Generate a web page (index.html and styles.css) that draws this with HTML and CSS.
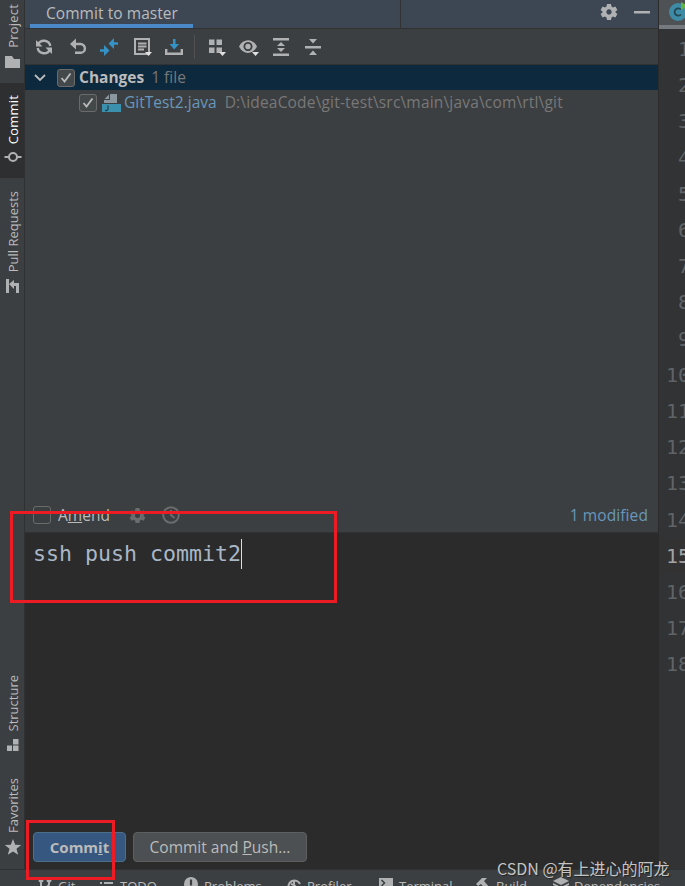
FILE: index.html
```html
<!DOCTYPE html>
<html lang="en">
<head>
    <meta charset="UTF-8">
    <title>Commit to master</title>
    <link rel="stylesheet" href="styles.css">
</head>
<body>
    <div class="workspace">
        <nav class="stripe">
            <div class="stripe-tab project">
                <span>Project</span>
                <svg width="16" height="16" viewBox="0 0 16 16"><path class="fill" d="M0 2h7l2 3h6v9H0z"/></svg>
            </div>
            <div class="stripe-tab commit active">
                <span>Commit</span>
                <svg width="18" height="16" viewBox="0 0 18 16"><circle class="line" cx="9" cy="8" r="4"/><path class="line" d="M0.5 8H5M13 8h4.500"/></svg>
            </div>
            <div class="stripe-tab pull">
                <span>Pull Requests</span>
                <svg width="16" height="16" viewBox="0 0 16 16"><path class="fill" d="M1 1h3v14H1zM4 6l5-4v3h5v10h-3V8H9v3z"/></svg>
            </div>
            <div class="stripe-tab structure">
                <span>Structure</span>
                <svg width="16" height="16" viewBox="0 0 16 16"><path class="fill" d="M8 2h5.500v5.500H8zM2 8.500h5V14H2zM8 8.500h5.500V14H8z"/></svg>
            </div>
            <div class="stripe-tab favorites">
                <span>Favorites</span>
                <svg width="18" height="18" viewBox="0 0 18 18"><path class="fill" d="M9 1l2.200 5.700 6 .3-4.700 3.800 1.700 6L9 13.400l-5.200 3.400 1.700-6L.8 7l6-.3z"/></svg>
            </div>
        </nav>

        <main class="commit-panel">
            <header class="panel-header">
                <div class="panel-tab">Commit to master</div>
                <div class="panel-actions">
                    <svg width="18" height="18" viewBox="0 0 18 18"><use href="#gear"/></svg>
                    <svg width="16" height="18" viewBox="0 0 16 18"><path class="fill" d="M0 8h16v2.500H0z"/></svg>
                </div>
            </header>

            <div class="toolbar">
                <svg height="18" viewBox="0 0 18 18"><path class="line thick" d="M3 6.500a6.500 6.500 0 0 1 12.300 1.500M15 11.500a6.500 6.500 0 0 1-12.300-1.500"/><path class="fill" d="M1 2v6.500h6.500zM17 16V9.500h-6.500z"/></svg>
                <svg height="18" viewBox="0 0 18 18"><path class="line thick" d="M6 6h6.500a4.400 4.400 0 0 1 0 8.800H7"/><path class="fill" d="M8 .5v11L2 6z"/></svg>
                <svg height="18" viewBox="0 0 20 18"><path class="blue-line" d="M1 12.500h5M19 5.500h-5"/><path class="blue" d="M5 7l5.500 5.500L5 18zM15 0v11L9.500 5.500z"/></svg>
                <svg height="20" viewBox="0 0 20 20"><path class="line" d="M3 2h14v15H3zM6 6.500h8.500M6 9.500h8.500M6 12.500h6"/><path class="arrow" d="M13 15h7l-3.500 4z"/></svg>
                <svg height="18" viewBox="0 0 18 18"><path class="line thick" d="M1.200 11v4.800h15.600V11"/><path class="blue" d="M8 1h2.500v5H14l-4.800 5.500L4.500 6H8z"/></svg>
                <i class="separator"></i>
                <svg height="20" viewBox="0 0 20 20"><path class="fill" d="M2 2.500h5.500V8H2zM9.500 2.500H15V8H9.500zM2 10.500h5.500V16H2zM9.500 10.500H15V16H9.500z"/><path class="arrow" d="M12 15h7l-3.500 4z"/></svg>
                <svg class="tight" height="20" viewBox="0 0 20 20"><path class="fill" fill-rule="evenodd" d="M0 9.500C4 1 14 1 18 9.500c-4 8.500-14 8.500-18 0zm9-4.500a4.500 4.500 0 1 0 .01 0z"/><circle class="fill" cx="9" cy="9.500" r="2.700"/><path class="arrow" d="M13 15h7l-3.500 4z"/></svg>
                <svg class="tight" height="18" viewBox="-1 0 16 18"><path class="fill" d="M0 0h16v2.500H0zM0 15.500h16V18H0zM8 4l4 4H4zM8 14l4-4H4z"/></svg>
                <svg class="tight" height="18" viewBox="-1 0 16 18"><path class="fill" d="M0 8h16v2.500H0zM4 1h8L8 5.500zM4 17h8l-4-4.500z"/></svg>
            </div>

            <div class="tree">
                <div class="tree-row selected">
                    <svg class="chevron" width="12" height="8" viewBox="0 0 12 8"><path d="M1 1l5 5 5-5"/></svg>
                    <span class="checkbox"><svg width="12" height="12" viewBox="0 0 12 12"><path d="M1.500 6l3 3.500L10.500 1.500"/></svg></span>
                    <b>Changes</b>
                    <span class="muted count">1 file</span>
                </div>
                <div class="tree-row file">
                    <span class="checkbox"><svg width="12" height="12" viewBox="0 0 12 12"><path d="M1.500 6l3 3.500L10.500 1.500"/></svg></span>
                    <svg class="java" width="20" height="20" viewBox="0 0 20 20">
                        <path fill="#8b979f" d="M9 1h7v9H3V7h6z"/>
                        <path fill="#8b979f" d="M3.500 6L8 1.500V6z"/>
                        <path fill="#3b91ad" d="M1 11h19v8H1z"/>
                        <path fill="none" stroke="#20434f" stroke-width="1.300" d="M7 12.500v3.500q0 1.500-1.500 1.500H4"/>
                    </svg>
                    <span class="file-name">GitTest2.java</span>
                    <span class="muted path">D:\ideaCode\git-test\src\main\java\com\rtl\git</span>
                </div>
            </div>

            <div class="amend-row">
                <span class="checkbox empty"></span>
                <label>A<u>m</u>end</label>
                <svg class="dim amend-gear" width="17" height="17" viewBox="0 0 18 18"><use href="#gear"/></svg>
                <svg class="dim" width="18" height="18" viewBox="0 0 18 18"><circle class="line" cx="9" cy="9" r="7.800"/><path class="line" d="M9 4v5l3.500 3"/></svg>
                <span class="modified">1 modified</span>
            </div>

            <div class="message">
                <div class="message-text">ssh push commit2</div>
                <div class="buttons">
                    <button class="primary">Comm<u>i</u>t</button>
                    <button>Commit and <u>P</u>ush...</button>
                </div>
            </div>
        </main>

        <aside class="editor">
            <div class="editor-tab">
                <svg width="20" height="20" viewBox="0 0 20 20"><circle cx="10" cy="10" r="9" fill="#3d8ba5"/><path fill="none" stroke="#24444f" stroke-width="1.700" d="M13 7.500a3.700 3.700 0 1 0 0 5"/><path fill="#62b543" d="M13 0l7 4-7 4z"/></svg>
            </div>
            <ol class="line-numbers">
                <li>1</li><li>2</li><li>3</li><li>4</li><li>5</li><li>6</li>
                <li>7</li><li>8</li><li>9</li><li>10</li><li>11</li><li>12</li>
                <li>13</li><li>14</li><li class="current">15</li><li>16</li><li>17</li><li>18</li>
            </ol>
        </aside>
    </div>

    <footer class="bottom-bar">
        <div class="tool git"><svg width="16" height="16" viewBox="0 0 16 16"><path class="line" d="M4 3v12M12 3v4q0 3-8 5"/><circle class="fill" cx="4" cy="3" r="2.500"/><circle class="fill" cx="12" cy="3" r="2.500"/></svg>Git</div>
        <div class="tool todo"><svg width="16" height="16" viewBox="0 0 16 16"><path class="line" d="M1 2h2M5 2h9M1 6h2M5 6h9M1 10h2M5 10h9"/></svg>TODO</div>
        <div class="tool problems"><svg width="16" height="16" viewBox="0 0 16 16"><circle class="fill" cx="8" cy="7" r="7"/><path stroke="#3c3f41" stroke-width="2.200" d="M8 2.500v6M8 10v2"/></svg>Problems</div>
        <div class="tool profiler"><svg width="16" height="16" viewBox="0 0 16 16"><path class="line" d="M3 12A6 6 0 1 1 14 7M8 3v5l4 4M5 7l3 1"/></svg>Profiler</div>
        <div class="tool terminal"><svg width="16" height="16" viewBox="0 0 16 16"><path class="fill" d="M1 1h14v13H1z"/><path fill="none" stroke="#3c3f41" stroke-width="1.500" d="M3.500 3l3 3-3 3"/></svg>Terminal</div>
        <div class="tool build"><svg width="16" height="16" viewBox="0 0 16 16"><path class="fill" d="M1 7l6-6h5L9 4l6 7-3 3-6-7-3 2z"/></svg>Build</div>
        <div class="tool deps"><svg width="16" height="16" viewBox="0 0 16 16"><path class="fill" d="M8 0l8 4-8 4-8-4zM0 6l8 4 8-4v2l-8 4-8-4z"/></svg>Dependencies</div>
    </footer>

    <div class="highlight highlight-message"></div>
    <div class="highlight highlight-commit"></div>
    <div class="watermark">CSDN @有上进心的阿龙</div>

    <svg class="symbols" width="0" height="0">
        <symbol id="gear" viewBox="0 0 18 18">
            <path class="fill" fill-rule="evenodd" d="M7 1h4l.5 2.500 1.500.9 2.400-.9 2 3.500-1.900 1.500v1l1.900 1.500-2 3.500-2.400-.9-1.500.9L11 17H7l-.5-2.500-1.500-.9-2.400.9-2-3.500 1.900-1.500v-1L.6 7l2-3.500 2.400.9 1.500-.9zm2 5.300a2.700 2.700 0 1 0 .01 0z"/>
        </symbol>
    </svg>
</body>
</html>
```
FILE: styles.css
```css
* {
    box-sizing: border-box;
}
body {
    position: relative;
    width: 685px;
    height: 886px;
    margin: 0;
    overflow: hidden;
    background-color: #2b2b2b;
    color: #bbbbbb;
    font-family: "Open Sans", "Noto Sans", sans-serif;
    font-size: 15.5px;
    white-space: nowrap;
}
svg {
    display: block;
    flex: none;
}
.fill {
    fill: #afb1b3;
}
.line {
    fill: none;
    stroke: #afb1b3;
    stroke-width: 2;
}
.thick {
    stroke-width: 2.4;
}
.blue {
    fill: #3592c4;
}
.blue-line {
    fill: none;
    stroke: #3592c4;
    stroke-width: 2.4;
}
.arrow {
    fill: #e0e0e0;
}
.dim {
    opacity: 0.4;
}
.symbols {
    position: absolute;
}
.workspace {
    display: flex;
    height: 869px;
}

/* left stripe */
.stripe {
    display: flex;
    flex-direction: column;
    width: 25px;
    flex: none;
    background-color: #3c3f41;
    border-right: 1px solid #2f3133;
}
.stripe-tab {
    display: flex;
    flex-direction: column;
    align-items: center;
    justify-content: flex-end;
    gap: 6px;
    padding: 0 0 13px 1px;
    font-size: 13px;
    line-height: 20px;
}
.stripe-tab span {
    writing-mode: vertical-rl;
    transform: rotate(180deg);
}
.project {
    height: 83px;
    letter-spacing: 0.2px;
}
.commit {
    height: 95px;
    gap: 5px;
    letter-spacing: 0.2px;
}
.active {
    background-color: #2d2f30;
    color: #ffffff;
}
.pull {
    height: 127px;
    padding-bottom: 11px;
}
.structure {
    height: 100px;
    margin-top: auto;
    padding-bottom: 12px;
}
.favorites {
    height: 104px;
    gap: 5px;
}

/* commit tool window */
.commit-panel {
    display: flex;
    flex-direction: column;
    width: 633px;
    flex: none;
}
.panel-header {
    display: flex;
    justify-content: space-between;
    height: 29px;
    padding: 0 8px 0 5px;
    background: linear-gradient(#323232, #323232) 375px 0 / 1px 28px no-repeat #3d4754;
    border-bottom: 1px solid #323232;
}
.panel-tab {
    width: 163px;
    padding-left: 16px;
    border-bottom: 4px solid #4a88c7;
    letter-spacing: 0.06px;
    line-height: 26px;
}
.panel-actions {
    display: flex;
    gap: 16px;
    padding-top: 3px;
}
.toolbar {
    display: flex;
    align-items: center;
    gap: 12.5px;
    height: 36px;
    padding-left: 9px;
    background-color: #3c3f41;
    border-bottom: 1px solid #323232;
}
.toolbar svg {
    width: 20px;
}
.toolbar .tight {
    margin-left: -1px;
}
.separator {
    width: 1px;
    height: 24px;
    margin-left: -3px;
    background-color: #515151;
}
.tree {
    flex: 1;
    background-color: #3c3f41;
}
.tree-row {
    display: flex;
    align-items: center;
    height: 25px;
}
.tree-row b,
.count,
.file-name,
.path {
    padding-bottom: 2px;
}
.selected {
    padding-left: 9px;
    background-color: #0d293e;
}
.chevron {
    margin-right: 11px;
}
.chevron path,
.checkbox path {
    fill: none;
    stroke: #bbbbbb;
    stroke-width: 1.8;
}
.checkbox {
    display: flex;
    align-items: center;
    justify-content: center;
    width: 18px;
    height: 18px;
    flex: none;
    margin-right: 4px;
    border: 1px solid #6b6b6b;
    border-radius: 3px;
    background-color: #43494a;
}
.muted {
    color: #787878;
}
.count {
    margin-left: 7px;
}
.file {
    padding-left: 54px;
}
.java {
    margin-right: 3px;
}
.file-name {
    color: #6897bb;
}
.path {
    margin-left: 8px;
    letter-spacing: 0.18px;
}
.amend-row {
    display: flex;
    align-items: center;
    height: 35px;
    padding: 0 10px 0 8px;
    background-color: #3c3f41;
    border-bottom: 1px solid #323232;
}
.empty {
    margin-right: 7px;
    background-color: transparent;
}
.amend-gear {
    margin: 0 16px 0 19px;
}
.modified {
    margin-left: auto;
    color: #6897bb;
    letter-spacing: 0.1px;
}
.message {
    display: flex;
    flex-direction: column;
    justify-content: space-between;
    height: 336px;
    padding: 6px 8px 7px;
    background-color: #2b2b2b;
}
.message-text {
    width: 209px;
    border-right: 1px solid #dddddd;
    color: #a9b7c6;
    font-family: "DejaVu Sans Mono", monospace;
    font-size: 21.6px;
    line-height: 30px;
}
.buttons {
    display: flex;
    gap: 7px;
}
button {
    width: 174px;
    height: 30px;
    padding: 0;
    border: 1px solid #5e6060;
    border-radius: 4px;
    background-color: #4c5052;
    color: #bbbbbb;
    font: inherit;
}
.primary {
    width: 93px;
    border-color: #4c708c;
    background-color: #365880;
    font-size: 15px;
    font-weight: bold;
}

/* editor gutter */
.editor {
    width: 27px;
    overflow: hidden;
    background-color: #313335;
    border-left: 1px solid #2b2b2b;
}
.editor-tab {
    height: 29px;
    padding: 2px 0 0 9px;
    background-color: #4e5254;
    border-bottom: 4px solid #747a80;
}
.line-numbers {
    width: 31px;
    margin: 2px 0 0;
    padding: 0;
    list-style: none;
    color: #606366;
    font-family: "DejaVu Sans Mono", monospace;
    font-size: 20px;
    line-height: 36.2px;
    text-align: right;
}
.current {
    background-color: #323232;
    color: #a4a3a3;
}

/* bottom tool bar, cut off by the window edge */
.bottom-bar {
    display: flex;
    height: 17px;
    padding: 7px 0 0 37px;
    overflow: hidden;
    background-color: #3c3f41;
    border-top: 1px solid #2f3133;
    font-size: 13px;
    line-height: 18px;
}
.tool {
    display: flex;
    gap: 5px;
    flex: none;
}
.git {
    width: 62px;
}
.todo {
    width: 84px;
}
.problems {
    width: 103px;
}
.profiler {
    width: 92px;
}
.terminal {
    width: 97px;
}
.build {
    width: 78px;
}

.highlight {
    position: absolute;
    border: 3px solid #ed1c24;
}
.highlight-message {
    left: 10px;
    top: 511px;
    width: 327px;
    height: 92px;
}
.highlight-commit {
    left: 26px;
    top: 820px;
    width: 89px;
    height: 60px;
}
.watermark {
    position: absolute;
    left: 497px;
    top: 857px;
    color: #c4c4c4;
    font-family: "Noto Sans CJK SC", sans-serif;
    font-size: 16px;
    line-height: 22px;
    text-shadow: 1px 1px 1px #222222;
}
```
